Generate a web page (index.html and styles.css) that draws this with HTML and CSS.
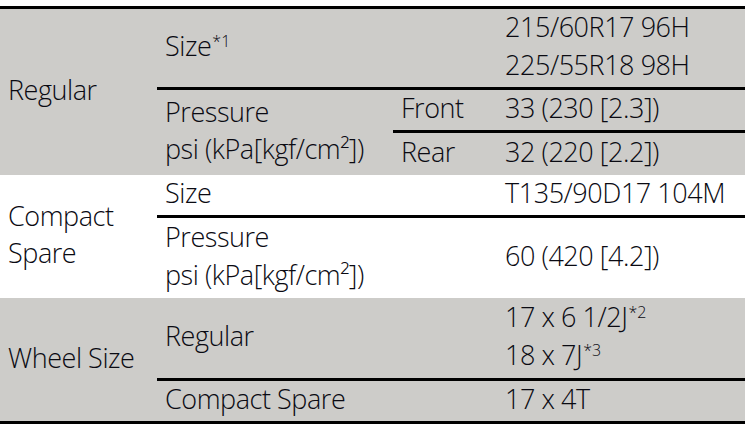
FILE: index.html
```html
<!DOCTYPE html>
<html>
<head>
<meta charset="utf-8">
<link rel="stylesheet" href="styles.css">
</head>
<body>
<div class="spec">
  <div class="section gray s1">
    <div class="cell head r-all"><span>Regular</span></div>
    <div class="cell label c23"><span>Size<sup>*1</sup></span></div>
    <div class="cell val two"><span>215/60R17 96H<br>225/55R18 98H</span></div>
    <div class="cell label c2 rows23 sep two"><span>Pressure<br>psi (kPa[kgf/cm²])</span></div>
    <div class="cell label c3 sep"><span>Front</span></div>
    <div class="cell val sep"><span>33 (230 [2.3])</span></div>
    <div class="cell label c3 sep"><span>Rear</span></div>
    <div class="cell val sep"><span>32 (220 [2.2])</span></div>
  </div>
  <div class="section white s2">
    <div class="cell head r-all two"><span>Compact<br>Spare</span></div>
    <div class="cell label c23"><span>Size</span></div>
    <div class="cell val"><span>T135/90D17 104M</span></div>
    <div class="cell label c23 sep two"><span>Pressure<br>psi (kPa[kgf/cm²])</span></div>
    <div class="cell val sep"><span>60 (420 [4.2])</span></div>
  </div>
  <div class="section gray s3">
    <div class="cell head r-all"><span>Wheel Size</span></div>
    <div class="cell label c23"><span>Regular</span></div>
    <div class="cell val two"><span>17 x 6 1/2J<sup>*2</sup><br>18 x 7J<sup>*3</sup></span></div>
    <div class="cell label c23 sep"><span>Compact Spare</span></div>
    <div class="cell val sep"><span>17 x 4T</span></div>
  </div>
</div>
</body>
</html>
```
FILE: styles.css
```css
html, body {
  margin: 0;
  padding: 0;
  background: #fff;
}
body {
  font-family: "Open Sans", "DejaVu Sans Condensed", sans-serif;
  font-stretch: 88%;
  font-weight: 360;
  font-size: 27px;
  letter-spacing: -0.45px;
  color: #0a0a12;
}
.spec {
  margin-top: 6px;
  width: 745px;
  border-top: 3px solid #000;
  border-bottom: 3px solid #000;
  display: flex;
  flex-direction: column;
}
.section {
  display: grid;
  grid-template-columns: 157px 236px 104px 1fr;
}
.gray { background: #cdccc9; }
.white { background: #fff; }
.s1 { grid-template-rows: 78px 43px 45px; }
.s2 { grid-template-rows: 40px 83px; }
.s3 { grid-template-rows: 80px 43px; }

.cell {
  box-sizing: border-box;
  padding-left: 8px;
  padding-bottom: 5px;
  display: flex;
  align-items: center;
  line-height: 37px;
  white-space: nowrap;
}
.cell.two { line-height: 37.5px; }
.head { grid-column: 1; grid-row: 1 / -1; }
.c23 { grid-column: 2 / 4; }
.c2 { grid-column: 2; }
.c3 { grid-column: 3; }
.rows23 { grid-row: 2 / 4; }
.val { grid-column: 4; }
.sep { border-top: 3px solid #000; }

sup {
  font-size: 16px;
  line-height: 0;
  vertical-align: 9px;
  margin-left: 1px;
  letter-spacing: 0;
}
```
